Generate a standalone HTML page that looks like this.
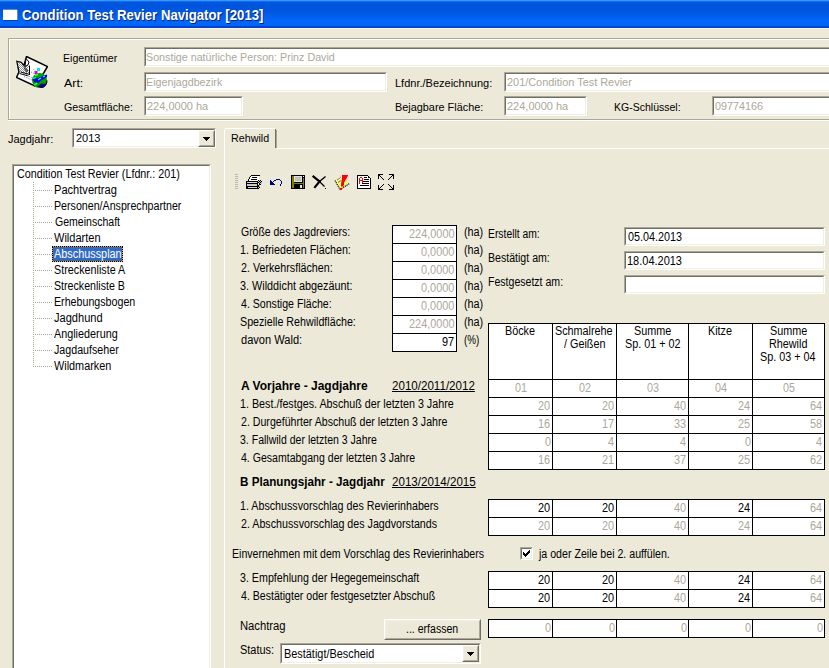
<!DOCTYPE html>
<html><head><meta charset="utf-8"><style>
html,body{margin:0;padding:0}
body{width:829px;height:668px;overflow:hidden;position:relative;background:#ECE9D8;font-family:"Liberation Sans", sans-serif}
.t{position:absolute;white-space:nowrap;transform-origin:0 0}
</style></head><body>
<div style="position:absolute;left:0px;top:0px;width:829px;height:28px;background:linear-gradient(to bottom,#3D95FF 0px,#3D95FF 1px,#0A6CF4 1px,#0A6CF4 2px,#0058E2 2px,#0054DB 5px,#0056DE 9px,#005CE8 15px,#0064F6 19px,#0067FC 24px,#0062F4 26px,#0062F4 26px,#0044D0 26px,#0042CF 28px)"></div>
<div style="position:absolute;left:0px;top:28px;width:829px;height:1px;background:#FBF6E4"></div>
<div style="position:absolute;left:3px;top:9px;width:14px;height:1px;background:#5A8CD8"></div>
<div style="position:absolute;left:3px;top:10px;width:14px;height:10px;background:#fff"></div>
<div style="position:absolute;left:17px;top:10px;width:1px;height:10px;background:#7A8AA0"></div>
<div style="position:absolute;left:4px;top:20px;width:14px;height:1px;background:#0B3FA8"></div>
<div style="position:absolute;left:8px;top:38px;width:900px;height:82px;box-sizing:border-box;border:1px solid #ACA899"></div>
<div style="position:absolute;left:9px;top:39px;width:900px;height:82px;box-sizing:border-box;border:1px solid #fff;border-right:none"></div>
<div style="position:absolute;left:8px;top:119px;width:900px;height:1px;background:#ACA899"></div>
<div style="position:absolute;left:8px;top:120px;width:900px;height:1px;background:#fff"></div>
<div style="position:absolute;left:144px;top:47px;width:700px;height:20px;background:#fff;box-sizing:border-box;border-top:1px solid #ACA899;border-left:1px solid #ACA899;border-right:1px solid #fff;border-bottom:1px solid #fff"></div>
<div style="position:absolute;left:145px;top:48px;width:698px;height:18px;box-sizing:border-box;border-top:1px solid #716F64;border-left:1px solid #716F64;border-right:1px solid #F1EFE2;border-bottom:1px solid #F1EFE2"></div>
<div style="position:absolute;left:144px;top:72px;width:243px;height:20px;background:#fff;box-sizing:border-box;border-top:1px solid #ACA899;border-left:1px solid #ACA899;border-right:1px solid #fff;border-bottom:1px solid #fff"></div>
<div style="position:absolute;left:145px;top:73px;width:241px;height:18px;box-sizing:border-box;border-top:1px solid #716F64;border-left:1px solid #716F64;border-right:1px solid #F1EFE2;border-bottom:1px solid #F1EFE2"></div>
<div style="position:absolute;left:144px;top:96px;width:99px;height:20px;background:#fff;box-sizing:border-box;border-top:1px solid #ACA899;border-left:1px solid #ACA899;border-right:1px solid #fff;border-bottom:1px solid #fff"></div>
<div style="position:absolute;left:145px;top:97px;width:97px;height:18px;box-sizing:border-box;border-top:1px solid #716F64;border-left:1px solid #716F64;border-right:1px solid #F1EFE2;border-bottom:1px solid #F1EFE2"></div>
<div style="position:absolute;left:504px;top:72px;width:400px;height:20px;background:#fff;box-sizing:border-box;border-top:1px solid #ACA899;border-left:1px solid #ACA899;border-right:1px solid #fff;border-bottom:1px solid #fff"></div>
<div style="position:absolute;left:505px;top:73px;width:398px;height:18px;box-sizing:border-box;border-top:1px solid #716F64;border-left:1px solid #716F64;border-right:1px solid #F1EFE2;border-bottom:1px solid #F1EFE2"></div>
<div style="position:absolute;left:504px;top:96px;width:83px;height:20px;background:#fff;box-sizing:border-box;border-top:1px solid #ACA899;border-left:1px solid #ACA899;border-right:1px solid #fff;border-bottom:1px solid #fff"></div>
<div style="position:absolute;left:505px;top:97px;width:81px;height:18px;box-sizing:border-box;border-top:1px solid #716F64;border-left:1px solid #716F64;border-right:1px solid #F1EFE2;border-bottom:1px solid #F1EFE2"></div>
<div style="position:absolute;left:712px;top:96px;width:200px;height:20px;background:#fff;box-sizing:border-box;border-top:1px solid #ACA899;border-left:1px solid #ACA899;border-right:1px solid #fff;border-bottom:1px solid #fff"></div>
<div style="position:absolute;left:713px;top:97px;width:198px;height:18px;box-sizing:border-box;border-top:1px solid #716F64;border-left:1px solid #716F64;border-right:1px solid #F1EFE2;border-bottom:1px solid #F1EFE2"></div>
<div style="position:absolute;left:72px;top:128px;width:144px;height:20px;background:#fff;box-sizing:border-box;border-top:1px solid #ACA899;border-left:1px solid #ACA899;border-right:1px solid #fff;border-bottom:1px solid #fff"></div>
<div style="position:absolute;left:73px;top:129px;width:142px;height:18px;box-sizing:border-box;border-top:1px solid #716F64;border-left:1px solid #716F64;border-right:1px solid #F1EFE2;border-bottom:1px solid #F1EFE2"></div>
<div style="position:absolute;left:198px;top:130px;width:17px;height:17px;background:#ECE9D8;box-sizing:border-box;border-top:1px solid #fff;border-left:1px solid #fff;border-right:1px solid #716F64;border-bottom:1px solid #716F64"></div>
<div style="position:absolute;left:199px;top:131px;width:15px;height:15px;box-sizing:border-box;border-top:1px solid #F1EFE2;border-left:1px solid #F1EFE2;border-right:1px solid #ACA899;border-bottom:1px solid #ACA899"></div>
<svg style="position:absolute;left:203px;top:137px" width="7" height="4"><path d="M0 0h7v1h-1v1h-1v1h-1v1h-1v-1h-1v-1h-1v-1h-1z" fill="#000"/></svg>
<div style="position:absolute;left:12px;top:164px;width:199px;height:520px;background:#fff;box-sizing:border-box;border-top:1px solid #ACA899;border-left:1px solid #ACA899;border-right:1px solid #fff;border-bottom:1px solid #fff"></div>
<div style="position:absolute;left:13px;top:165px;width:197px;height:518px;box-sizing:border-box;border-top:1px solid #716F64;border-left:1px solid #716F64;border-right:1px solid #F1EFE2;border-bottom:1px solid #F1EFE2"></div>
<div style="position:absolute;left:33px;top:182px;width:1px;height:185px;background:repeating-linear-gradient(to bottom,#A9A593 0 1px,transparent 1px 2px)"></div>
<div style="position:absolute;left:35px;top:190px;width:17px;height:1px;background:repeating-linear-gradient(to right,#A9A593 0 1px,transparent 1px 2px)"></div>
<div style="position:absolute;left:35px;top:206px;width:17px;height:1px;background:repeating-linear-gradient(to right,#A9A593 0 1px,transparent 1px 2px)"></div>
<div style="position:absolute;left:35px;top:222px;width:17px;height:1px;background:repeating-linear-gradient(to right,#A9A593 0 1px,transparent 1px 2px)"></div>
<div style="position:absolute;left:35px;top:238px;width:17px;height:1px;background:repeating-linear-gradient(to right,#A9A593 0 1px,transparent 1px 2px)"></div>
<div style="position:absolute;left:35px;top:254px;width:17px;height:1px;background:repeating-linear-gradient(to right,#A9A593 0 1px,transparent 1px 2px)"></div>
<div style="position:absolute;left:52px;top:246px;width:71px;height:16px;background:#F5A830"></div>
<div style="position:absolute;left:52px;top:246px;width:71px;height:16px;box-sizing:border-box;border:1px dotted #000"></div>
<div style="position:absolute;left:53px;top:247px;width:69px;height:14px;background:#316AC5"></div>
<div style="position:absolute;left:35px;top:270px;width:17px;height:1px;background:repeating-linear-gradient(to right,#A9A593 0 1px,transparent 1px 2px)"></div>
<div style="position:absolute;left:35px;top:286px;width:17px;height:1px;background:repeating-linear-gradient(to right,#A9A593 0 1px,transparent 1px 2px)"></div>
<div style="position:absolute;left:35px;top:302px;width:17px;height:1px;background:repeating-linear-gradient(to right,#A9A593 0 1px,transparent 1px 2px)"></div>
<div style="position:absolute;left:35px;top:318px;width:17px;height:1px;background:repeating-linear-gradient(to right,#A9A593 0 1px,transparent 1px 2px)"></div>
<div style="position:absolute;left:35px;top:334px;width:17px;height:1px;background:repeating-linear-gradient(to right,#A9A593 0 1px,transparent 1px 2px)"></div>
<div style="position:absolute;left:35px;top:350px;width:17px;height:1px;background:repeating-linear-gradient(to right,#A9A593 0 1px,transparent 1px 2px)"></div>
<div style="position:absolute;left:35px;top:366px;width:17px;height:1px;background:repeating-linear-gradient(to right,#A9A593 0 1px,transparent 1px 2px)"></div>
<div style="position:absolute;left:224px;top:148px;width:700px;height:600px;background:#ECE9D8;border-left:1px solid #fff;border-top:1px solid #fff"></div>
<div style="position:absolute;left:224px;top:129px;width:52px;height:20px;background:#ECE9D8;border-left:1px solid #fff"></div>
<div style="position:absolute;left:225px;top:128px;width:50px;height:1px;background:#fff"></div>
<div style="position:absolute;left:275px;top:129px;width:1px;height:19px;background:#716F64"></div>
<div style="position:absolute;left:276px;top:130px;width:1px;height:18px;background:#ACA899"></div>
<div style="position:absolute;left:235px;top:174px;width:3px;height:1px;background:#B8B8B8"></div>
<div style="position:absolute;left:235px;top:176px;width:3px;height:1px;background:#B8B8B8"></div>
<div style="position:absolute;left:235px;top:178px;width:3px;height:1px;background:#B8B8B8"></div>
<div style="position:absolute;left:235px;top:180px;width:3px;height:1px;background:#B8B8B8"></div>
<div style="position:absolute;left:235px;top:182px;width:3px;height:1px;background:#B8B8B8"></div>
<div style="position:absolute;left:235px;top:184px;width:3px;height:1px;background:#B8B8B8"></div>
<div style="position:absolute;left:235px;top:186px;width:3px;height:1px;background:#B8B8B8"></div>
<div style="position:absolute;left:235px;top:188px;width:3px;height:1px;background:#B8B8B8"></div>
<svg style="position:absolute;left:244px;top:172px" width="20" height="20" shape-rendering="crispEdges">
<path d="M7 3h9v1h-1v5h-1v-5h-8zM6 4h1v1h-1zM5 5h1v2h-1zM4 7h1v2h-1z" fill="#000"/>
<path d="M7 4h8v5h-10v-2h1v-2h1z" fill="#fff"/>
<rect x="8" y="5" width="5" height="1" fill="#000"/><rect x="7" y="7" width="6" height="1" fill="#000"/>
<rect x="2" y="9" width="12" height="8" fill="#000"/>
<rect x="3" y="10" width="10" height="1" fill="#D8D8E8"/>
<rect x="3" y="12" width="10" height="2" fill="#C8C8D8"/>
<rect x="9" y="13" width="3" height="1" fill="#F0F000"/>
<rect x="4" y="15" width="9" height="1" fill="#D8D8E8"/>
<path d="M14 8h1v1h-1zM16 8h1v1h-1zM15 9h1v1h-1zM17 9h1v1h-1zM14 10h1v1h-1zM16 10h1v1h-1zM15 11h1v2h-1zM16 12h1v1h-1zM14 13h1v2h-1zM15 15h1v1h-1zM14 16h1v1h-1z" fill="#000"/>
<path d="M15 8h1v1h-1zM14 9h1v1h-1zM16 9h1v1h-1zM15 10h1v1h-1zM17 10h1v2h-1zM16 11h1v1h-1zM15 13h1v2h-1zM14 15h1v1h-1z" fill="#C0C0C0"/>
</svg>
<svg style="position:absolute;left:266px;top:172px" width="20" height="20" shape-rendering="crispEdges">
<path d="M4 8h1v1h1v1h1v1h1v1h1v1h-5z" fill="#000080"/>
<path d="M7 9h1v1h-1zM8 8h2v1h-2zM10 7h4v1h-4zM14 8h1v1h-1zM15 9h1v3h-1zM14 12h1v2h-1z" fill="#000080"/>
</svg>
<svg style="position:absolute;left:288px;top:172px" width="20" height="20" shape-rendering="crispEdges">
<rect x="3" y="3" width="14" height="14" fill="#000"/>
<rect x="4" y="4" width="2" height="12" fill="#808000"/>
<rect x="15" y="6" width="1" height="10" fill="#808000"/>
<rect x="4" y="11" width="12" height="1" fill="#808000"/>
<rect x="6" y="4" width="8" height="6" fill="#E0E0E0"/>
<rect x="7" y="5" width="6" height="4" fill="#C0C0C0"/>
<rect x="15" y="4" width="1" height="1" fill="#fff"/>
<rect x="12" y="13" width="2" height="3" fill="#E8E8E8"/>
</svg>
<svg style="position:absolute;left:310px;top:172px" width="20" height="20">
<path d="M3.5 4.5L9.5 9.5" stroke="#000" stroke-width="2.2" stroke-linecap="square"/>
<path d="M9.5 9.5L14.5 14.5" stroke="#000" stroke-width="1.3"/>
<rect x="15" y="16" width="1" height="1" fill="#000"/>
<path d="M15.5 4.5L9.5 9.5" stroke="#000" stroke-width="1.4"/>
<path d="M9.5 9.5L5 15" stroke="#000" stroke-width="2.2" stroke-linecap="square"/>
</svg>
<svg style="position:absolute;left:332px;top:172px" width="20" height="20">
<defs><pattern id="ychk" width="2" height="2" patternUnits="userSpaceOnUse"><rect width="2" height="2" fill="#FFFF00"/><rect width="1" height="1" fill="#fff"/><rect x="1" y="1" width="1" height="1" fill="#fff"/></pattern></defs>
<path d="M3 8.5L9 4.5L17.5 11.5L8 17.5Z" fill="url(#ychk)"/>
<path d="M3 8.5L8 17.5L17.5 11.5" fill="none" stroke="#000" stroke-width="1.2" stroke-dasharray="1.2 0.8"/>
<path d="M5 8L8 6M6 10.5L9 8.5M8 5.5L9 5" stroke="#7070A0" stroke-width="1"/>
<path d="M10 3H16V4L15 5V6L14 7L13 9L12 11V13L11 14.5H9V12L9.5 9L10 6Z" fill="#FF0000"/>
<rect x="8" y="16" width="2" height="2" fill="#FF0000"/>
</svg>
<svg style="position:absolute;left:354px;top:172px" width="20" height="20" shape-rendering="crispEdges">
<path d="M3 3h11v1h1v1h1v1h1v11h-14z" fill="#000"/>
<path d="M4 4h10v2h2v10h-12z" fill="#fff"/>
<path d="M6 5h2v1h1v6h-1v-3h-2v3h-1v-6h1zM6 6v2h2v-2z" fill="#FF0000"/>
<rect x="10" y="5" width="3" height="1" fill="#000"/>
<rect x="10" y="7" width="5" height="1" fill="#000"/>
<rect x="9" y="9" width="6" height="1" fill="#000"/>
<rect x="8" y="11" width="7" height="1" fill="#000"/>
<rect x="6" y="13" width="9" height="1" fill="#000"/>
</svg>
<svg style="position:absolute;left:376px;top:172px" width="20" height="20" shape-rendering="crispEdges">
<path d="M2 2h5v1h-4v4h-1zM3 3h1v1h-1z" fill="#000"/>
<path d="M4 4h1v1h-1zM5 5h1v1h-1zM6 6h1v1h-1zM7 7h1v1h-1z" fill="#000"/>
<path d="M13 2h5v5h-1v-4h-4zM16 3h1v1h-1z" fill="#000"/>
<path d="M15 4h1v1h-1zM14 5h1v1h-1zM13 6h1v1h-1zM12 7h1v1h-1z" fill="#000"/>
<path d="M2 13h1v4h4v1h-5zM3 16h1v1h-1z" fill="#000"/>
<path d="M4 15h1v1h-1zM5 14h1v1h-1zM6 13h1v1h-1zM7 12h1v1h-1z" fill="#000"/>
<path d="M17 13h1v5h-5v-1h4zM16 16h1v1h-1z" fill="#000"/>
<path d="M15 15h1v1h-1zM14 14h1v1h-1zM13 13h1v1h-1zM12 12h1v1h-1z" fill="#000"/>
</svg>
<svg style="position:absolute;left:16px;top:56px" width="32" height="32">
<defs><pattern id="chk" width="2" height="2" patternUnits="userSpaceOnUse"><rect width="2" height="2" fill="#fff"/><rect width="1" height="1" fill="#909090"/><rect x="1" y="1" width="1" height="1" fill="#909090"/></pattern></defs>
<path d="M10.5 0.5L31.5 10.5L28 16.5L19 30L0.5 21.5L3 16L1 5.5L5 6.5L8 9.5Z" fill="#fff" stroke="#000" stroke-width="1.5" stroke-linejoin="miter"/>
<path d="M1.5 6L5 7L8.5 10L11 8L13 10L12 12L13.5 18L10 19L4 15.5L3 12Z" fill="url(#chk)"/>
<path d="M10 2.5L13 6L12 9L9 10.5Z" fill="#fff" stroke="#000" stroke-width="1"/>
<path d="M3.5 17.5L12.5 20M4.5 16L14 18.5M13.5 9.5L13.5 19" stroke="#000" stroke-width="1"/>
<path d="M6 8L12 15M8 12L11 16" stroke="#000" stroke-width="0.8"/>
<path d="M8 20.5L17 24.5M11 19.5L18 22.5M17 13L20 15M15 16L19 18" stroke="#808080" stroke-width="0.9" stroke-dasharray="1 1"/>
<rect x="18.5" y="15" width="3" height="3" fill="#E000E0"/>
<rect x="21" y="12" width="3" height="3" fill="#00E8F0"/>
<circle cx="23.5" cy="24.5" r="7.5" fill="#00A000"/>
<path d="M31 24.5A7.5 7.5 0 0 1 23.5 32" fill="none" stroke="#000" stroke-width="1.2"/>
<path d="M16.5 23L22 22L28 19.5L31 18.5L31 21L26 24L22 27L18 26Z" fill="#0000E0"/>
<path d="M21 31L25 27.5L30 28L27 31.5Z" fill="#000090"/>
<path d="M17 22.5L20 21.5M22 24L25 22M27 21L29 20" stroke="#00FFFF" stroke-width="1.3"/>
<path d="M19 19.5L22 18.5M18.5 29L21 27" stroke="#40FF40" stroke-width="1.5"/>
</svg>

<div style="position:absolute;left:392px;top:225px;width:65px;height:19px;background:#fff;box-sizing:border-box;border:1px solid #000"></div>
<div style="position:absolute;left:392px;top:243px;width:65px;height:19px;background:#fff;box-sizing:border-box;border:1px solid #000"></div>
<div style="position:absolute;left:392px;top:261px;width:65px;height:19px;background:#fff;box-sizing:border-box;border:1px solid #000"></div>
<div style="position:absolute;left:392px;top:279px;width:65px;height:19px;background:#fff;box-sizing:border-box;border:1px solid #000"></div>
<div style="position:absolute;left:392px;top:297px;width:65px;height:19px;background:#fff;box-sizing:border-box;border:1px solid #000"></div>
<div style="position:absolute;left:392px;top:315px;width:65px;height:19px;background:#fff;box-sizing:border-box;border:1px solid #000"></div>
<div style="position:absolute;left:392px;top:333px;width:65px;height:19px;background:#fff;box-sizing:border-box;border:1px solid #000"></div>
<div style="position:absolute;left:624px;top:227px;width:201px;height:19px;background:#fff;box-sizing:border-box;border-top:1px solid #ACA899;border-left:1px solid #ACA899;border-right:1px solid #fff;border-bottom:1px solid #fff"></div>
<div style="position:absolute;left:625px;top:228px;width:199px;height:17px;box-sizing:border-box;border-top:1px solid #716F64;border-left:1px solid #716F64;border-right:1px solid #F1EFE2;border-bottom:1px solid #F1EFE2"></div>
<div style="position:absolute;left:624px;top:251px;width:201px;height:19px;background:#fff;box-sizing:border-box;border-top:1px solid #ACA899;border-left:1px solid #ACA899;border-right:1px solid #fff;border-bottom:1px solid #fff"></div>
<div style="position:absolute;left:625px;top:252px;width:199px;height:17px;box-sizing:border-box;border-top:1px solid #716F64;border-left:1px solid #716F64;border-right:1px solid #F1EFE2;border-bottom:1px solid #F1EFE2"></div>
<div style="position:absolute;left:624px;top:275px;width:201px;height:19px;background:#fff;box-sizing:border-box;border-top:1px solid #ACA899;border-left:1px solid #ACA899;border-right:1px solid #fff;border-bottom:1px solid #fff"></div>
<div style="position:absolute;left:625px;top:276px;width:199px;height:17px;box-sizing:border-box;border-top:1px solid #716F64;border-left:1px solid #716F64;border-right:1px solid #F1EFE2;border-bottom:1px solid #F1EFE2"></div>
<div style="position:absolute;left:488px;top:323px;width:337px;height:147px;background:#fff"></div>
<div style="position:absolute;left:488px;top:323px;width:337px;height:1px;background:#000"></div>
<div style="position:absolute;left:488px;top:379px;width:337px;height:1px;background:#000"></div>
<div style="position:absolute;left:488px;top:397px;width:337px;height:1px;background:#000"></div>
<div style="position:absolute;left:488px;top:415px;width:337px;height:1px;background:#000"></div>
<div style="position:absolute;left:488px;top:433px;width:337px;height:1px;background:#000"></div>
<div style="position:absolute;left:488px;top:451px;width:337px;height:1px;background:#000"></div>
<div style="position:absolute;left:488px;top:469px;width:337px;height:1px;background:#000"></div>
<div style="position:absolute;left:488px;top:323px;width:1px;height:147px;background:#000"></div>
<div style="position:absolute;left:552px;top:323px;width:1px;height:147px;background:#000"></div>
<div style="position:absolute;left:616px;top:323px;width:1px;height:147px;background:#000"></div>
<div style="position:absolute;left:688px;top:323px;width:1px;height:147px;background:#000"></div>
<div style="position:absolute;left:752px;top:323px;width:1px;height:147px;background:#000"></div>
<div style="position:absolute;left:824px;top:323px;width:1px;height:147px;background:#000"></div>
<div style="position:absolute;left:488px;top:499px;width:337px;height:37px;background:#fff"></div>
<div style="position:absolute;left:488px;top:499px;width:337px;height:1px;background:#000"></div>
<div style="position:absolute;left:488px;top:517px;width:337px;height:1px;background:#000"></div>
<div style="position:absolute;left:488px;top:535px;width:337px;height:1px;background:#000"></div>
<div style="position:absolute;left:488px;top:499px;width:1px;height:37px;background:#000"></div>
<div style="position:absolute;left:552px;top:499px;width:1px;height:37px;background:#000"></div>
<div style="position:absolute;left:616px;top:499px;width:1px;height:37px;background:#000"></div>
<div style="position:absolute;left:688px;top:499px;width:1px;height:37px;background:#000"></div>
<div style="position:absolute;left:752px;top:499px;width:1px;height:37px;background:#000"></div>
<div style="position:absolute;left:824px;top:499px;width:1px;height:37px;background:#000"></div>
<div style="position:absolute;left:520px;top:547px;width:13px;height:13px;background:#fff;box-sizing:border-box;border-top:1px solid #ACA899;border-left:1px solid #ACA899;border-right:1px solid #fff;border-bottom:1px solid #fff"></div>
<div style="position:absolute;left:521px;top:548px;width:11px;height:11px;box-sizing:border-box;border-top:1px solid #716F64;border-left:1px solid #716F64;border-right:1px solid #F1EFE2;border-bottom:1px solid #F1EFE2"></div>
<svg style="position:absolute;left:523px;top:550px" width="7" height="7"><path d="M0 2h1v1h1v1h1v-1h1v-1h1v-1h1v-1h1v3h-1v1h-1v1h-1v1h-1v1h-1v-1h-1v-1h-1v-1h-1z" fill="#000"/></svg>
<div style="position:absolute;left:488px;top:571px;width:337px;height:37px;background:#fff"></div>
<div style="position:absolute;left:488px;top:571px;width:337px;height:1px;background:#000"></div>
<div style="position:absolute;left:488px;top:589px;width:337px;height:1px;background:#000"></div>
<div style="position:absolute;left:488px;top:607px;width:337px;height:1px;background:#000"></div>
<div style="position:absolute;left:488px;top:571px;width:1px;height:37px;background:#000"></div>
<div style="position:absolute;left:552px;top:571px;width:1px;height:37px;background:#000"></div>
<div style="position:absolute;left:616px;top:571px;width:1px;height:37px;background:#000"></div>
<div style="position:absolute;left:688px;top:571px;width:1px;height:37px;background:#000"></div>
<div style="position:absolute;left:752px;top:571px;width:1px;height:37px;background:#000"></div>
<div style="position:absolute;left:824px;top:571px;width:1px;height:37px;background:#000"></div>
<div style="position:absolute;left:384px;top:619px;width:97px;height:21px;background:#ECE9D8;box-sizing:border-box;border-top:1px solid #fff;border-left:1px solid #fff;border-right:1px solid #716F64;border-bottom:1px solid #716F64"></div>
<div style="position:absolute;left:385px;top:620px;width:95px;height:19px;box-sizing:border-box;border-top:1px solid #F1EFE2;border-left:1px solid #F1EFE2;border-right:1px solid #ACA899;border-bottom:1px solid #ACA899"></div>
<div style="position:absolute;left:488px;top:619px;width:337px;height:19px;background:#fff"></div>
<div style="position:absolute;left:488px;top:619px;width:337px;height:1px;background:#000"></div>
<div style="position:absolute;left:488px;top:637px;width:337px;height:1px;background:#000"></div>
<div style="position:absolute;left:488px;top:619px;width:1px;height:19px;background:#000"></div>
<div style="position:absolute;left:552px;top:619px;width:1px;height:19px;background:#000"></div>
<div style="position:absolute;left:616px;top:619px;width:1px;height:19px;background:#000"></div>
<div style="position:absolute;left:688px;top:619px;width:1px;height:19px;background:#000"></div>
<div style="position:absolute;left:752px;top:619px;width:1px;height:19px;background:#000"></div>
<div style="position:absolute;left:824px;top:619px;width:1px;height:19px;background:#000"></div>
<div style="position:absolute;left:280px;top:643px;width:201px;height:21px;background:#fff;box-sizing:border-box;border-top:1px solid #ACA899;border-left:1px solid #ACA899;border-right:1px solid #fff;border-bottom:1px solid #fff"></div>
<div style="position:absolute;left:281px;top:644px;width:199px;height:19px;box-sizing:border-box;border-top:1px solid #716F64;border-left:1px solid #716F64;border-right:1px solid #F1EFE2;border-bottom:1px solid #F1EFE2"></div>
<div style="position:absolute;left:462px;top:645px;width:17px;height:17px;background:#ECE9D8;box-sizing:border-box;border-top:1px solid #fff;border-left:1px solid #fff;border-right:1px solid #716F64;border-bottom:1px solid #716F64"></div>
<div style="position:absolute;left:463px;top:646px;width:15px;height:15px;box-sizing:border-box;border-top:1px solid #F1EFE2;border-left:1px solid #F1EFE2;border-right:1px solid #ACA899;border-bottom:1px solid #ACA899"></div>
<svg style="position:absolute;left:467px;top:652px" width="7" height="4"><path d="M0 0h7v1h-1v1h-1v1h-1v1h-1v-1h-1v-1h-1v-1h-1z" fill="#000"/></svg>
<div class="t" style="left:22.00px;top:7.0px;font:bold 14px 'Liberation Sans';line-height:16px;color:#fff;transform:scaleX(0.9414);text-shadow:1px 1px 0 #0A246A">Condition Test Revier Navigator [2013]</div>
<div class="t" style="left:63.04px;top:51.5px;font:11px 'Liberation Sans';line-height:13px;color:#000;transform:scaleX(0.9636)">Eigentümer</div>
<div class="t" style="left:64.00px;top:76.5px;font:11px 'Liberation Sans';line-height:13px;color:#000;transform:scaleX(1.1250)">Art:</div>
<div class="t" style="left:64.00px;top:100.5px;font:11px 'Liberation Sans';line-height:13px;color:#000;transform:scaleX(0.9714)">Gesamtfläche:</div>
<div class="t" style="left:146.03px;top:50.5px;font:11px 'Liberation Sans';line-height:13px;color:#ACA899;transform:scaleX(0.9740)">Sonstige natürliche Person: Prinz David</div>
<div class="t" style="left:146.03px;top:75.5px;font:11px 'Liberation Sans';line-height:13px;color:#ACA899;transform:scaleX(0.9740)">Eigenjagdbezirk</div>
<div class="t" style="left:147.00px;top:99.5px;font:11px 'Liberation Sans';line-height:13px;color:#ACA899;transform:scaleX(1.0000)">224,0000 ha</div>
<div class="t" style="left:395.00px;top:76.5px;font:11px 'Liberation Sans';line-height:13px;color:#000;transform:scaleX(1.0000)">Lfdnr./Bezeichnung:</div>
<div class="t" style="left:395.01px;top:100.5px;font:11px 'Liberation Sans';line-height:13px;color:#000;transform:scaleX(0.9886)">Bejagbare Fläche:</div>
<div class="t" style="left:614.04px;top:100.5px;font:11px 'Liberation Sans';line-height:13px;color:#000;transform:scaleX(0.9559)">KG-Schlüssel:</div>
<div class="t" style="left:507.00px;top:75.5px;font:11px 'Liberation Sans';line-height:13px;color:#ACA899;transform:scaleX(0.9921)">201/Condition Test Revier</div>
<div class="t" style="left:507.00px;top:99.5px;font:11px 'Liberation Sans';line-height:13px;color:#ACA899;transform:scaleX(1.0000)">224,0000 ha</div>
<div class="t" style="left:715.00px;top:99.5px;font:11px 'Liberation Sans';line-height:13px;color:#ACA899;transform:scaleX(0.9796)">09774166</div>
<div class="t" style="left:8.00px;top:132.5px;font:11px 'Liberation Sans';line-height:13px;color:#000;transform:scaleX(1.0000)">Jagdjahr:</div>
<div class="t" style="left:76.00px;top:131.5px;font:11px 'Liberation Sans';line-height:13px;color:#000;transform:scaleX(1.0000)">2013</div>
<div class="t" style="left:17.00px;top:167.0px;font:12px 'Liberation Sans';line-height:14px;color:#000;transform:scaleX(0.8950)">Condition Test Revier (Lfdnr.: 201)</div>
<div class="t" style="left:54.08px;top:183.0px;font:12px 'Liberation Sans';line-height:14px;color:#000;transform:scaleX(0.9242)">Pachtvertrag</div>
<div class="t" style="left:54.11px;top:199.0px;font:12px 'Liberation Sans';line-height:14px;color:#000;transform:scaleX(0.8881)">Personen/Ansprechpartner</div>
<div class="t" style="left:55.00px;top:215.0px;font:12px 'Liberation Sans';line-height:14px;color:#000;transform:scaleX(0.8784)">Gemeinschaft</div>
<div class="t" style="left:54.00px;top:231.0px;font:12px 'Liberation Sans';line-height:14px;color:#000;transform:scaleX(0.9200)">Wildarten</div>
<div class="t" style="left:54.00px;top:247.0px;font:12px 'Liberation Sans';line-height:14px;color:#fff;transform:scaleX(0.9054)">Abschussplan</div>
<div class="t" style="left:54.10px;top:263.0px;font:12px 'Liberation Sans';line-height:14px;color:#000;transform:scaleX(0.8974)">Streckenliste A</div>
<div class="t" style="left:54.11px;top:279.0px;font:12px 'Liberation Sans';line-height:14px;color:#000;transform:scaleX(0.8861)">Streckenliste B</div>
<div class="t" style="left:54.11px;top:295.0px;font:12px 'Liberation Sans';line-height:14px;color:#000;transform:scaleX(0.8889)">Erhebungsbogen</div>
<div class="t" style="left:54.00px;top:311.0px;font:12px 'Liberation Sans';line-height:14px;color:#000;transform:scaleX(0.9231)">Jagdhund</div>
<div class="t" style="left:54.00px;top:327.0px;font:12px 'Liberation Sans';line-height:14px;color:#000;transform:scaleX(0.9000)">Angliederung</div>
<div class="t" style="left:54.00px;top:343.0px;font:12px 'Liberation Sans';line-height:14px;color:#000;transform:scaleX(0.8904)">Jagdaufseher</div>
<div class="t" style="left:54.00px;top:359.0px;font:12px 'Liberation Sans';line-height:14px;color:#000;transform:scaleX(0.9048)">Wildmarken</div>
<div class="t" style="left:231.03px;top:131.5px;font:11px 'Liberation Sans';line-height:13px;color:#000;transform:scaleX(0.9737)">Rehwild</div>
<div class="t" style="left:241.00px;top:225.0px;font:12px 'Liberation Sans';line-height:14px;color:#000;transform:scaleX(0.8710)">Größe des Jagdreviers:</div>
<div class="t" style="left:408.50px;top:227.0px;font:12px 'Liberation Sans';line-height:14px;color:#ACA899;transform:scaleX(0.9100)">224,0000</div>
<div class="t" style="left:464.10px;top:225.0px;font:12px 'Liberation Sans';line-height:14px;color:#000;transform:scaleX(0.9000)">(ha)</div>
<div class="t" style="left:240.11px;top:243.0px;font:12px 'Liberation Sans';line-height:14px;color:#000;transform:scaleX(0.8934)">1. Befriedeten Flächen:</div>
<div class="t" style="left:421.24px;top:245.0px;font:12px 'Liberation Sans';line-height:14px;color:#ACA899;transform:scaleX(0.9100)">0,0000</div>
<div class="t" style="left:464.10px;top:243.0px;font:12px 'Liberation Sans';line-height:14px;color:#000;transform:scaleX(0.9000)">(ha)</div>
<div class="t" style="left:241.00px;top:261.0px;font:12px 'Liberation Sans';line-height:14px;color:#000;transform:scaleX(0.8922)">2. Verkehrsflächen:</div>
<div class="t" style="left:421.24px;top:263.0px;font:12px 'Liberation Sans';line-height:14px;color:#ACA899;transform:scaleX(0.9100)">0,0000</div>
<div class="t" style="left:464.10px;top:261.0px;font:12px 'Liberation Sans';line-height:14px;color:#000;transform:scaleX(0.9000)">(ha)</div>
<div class="t" style="left:240.10px;top:279.0px;font:12px 'Liberation Sans';line-height:14px;color:#000;transform:scaleX(0.9024)">3. Wilddicht abgezäunt:</div>
<div class="t" style="left:421.24px;top:281.0px;font:12px 'Liberation Sans';line-height:14px;color:#ACA899;transform:scaleX(0.9100)">0,0000</div>
<div class="t" style="left:464.10px;top:279.0px;font:12px 'Liberation Sans';line-height:14px;color:#000;transform:scaleX(0.9000)">(ha)</div>
<div class="t" style="left:241.00px;top:297.0px;font:12px 'Liberation Sans';line-height:14px;color:#000;transform:scaleX(0.8824)">4. Sonstige Fläche:</div>
<div class="t" style="left:421.24px;top:299.0px;font:12px 'Liberation Sans';line-height:14px;color:#ACA899;transform:scaleX(0.9100)">0,0000</div>
<div class="t" style="left:464.10px;top:297.0px;font:12px 'Liberation Sans';line-height:14px;color:#000;transform:scaleX(0.9000)">(ha)</div>
<div class="t" style="left:240.11px;top:315.0px;font:12px 'Liberation Sans';line-height:14px;color:#000;transform:scaleX(0.8906)">Spezielle Rehwildfläche:</div>
<div class="t" style="left:408.50px;top:317.0px;font:12px 'Liberation Sans';line-height:14px;color:#ACA899;transform:scaleX(0.9100)">224,0000</div>
<div class="t" style="left:464.10px;top:315.0px;font:12px 'Liberation Sans';line-height:14px;color:#000;transform:scaleX(0.9000)">(ha)</div>
<div class="t" style="left:241.00px;top:333.0px;font:12px 'Liberation Sans';line-height:14px;color:#000;transform:scaleX(0.9231)">davon Wald:</div>
<div class="t" style="left:442.17px;top:335.0px;font:12px 'Liberation Sans';line-height:14px;color:#000;transform:scaleX(0.9100)">97</div>
<div class="t" style="left:464.18px;top:333.0px;font:12px 'Liberation Sans';line-height:14px;color:#000;transform:scaleX(0.8235)">(%)</div>
<div class="t" style="left:488.14px;top:227.0px;font:12px 'Liberation Sans';line-height:14px;color:#000;transform:scaleX(0.8621)">Erstellt am:</div>
<div class="t" style="left:488.12px;top:251.0px;font:12px 'Liberation Sans';line-height:14px;color:#000;transform:scaleX(0.8824)">Bestätigt am:</div>
<div class="t" style="left:488.12px;top:275.0px;font:12px 'Liberation Sans';line-height:14px;color:#000;transform:scaleX(0.8795)">Festgesetzt am:</div>
<div class="t" style="left:628.00px;top:230.0px;font:12px 'Liberation Sans';line-height:14px;color:#000;transform:scaleX(0.9000)">05.04.2013</div>
<div class="t" style="left:627.08px;top:254.0px;font:12px 'Liberation Sans';line-height:14px;color:#000;transform:scaleX(0.9153)">18.04.2013</div>
<div class="t" style="left:505.20px;top:324.0px;font:12px 'Liberation Sans';line-height:14px;color:#000;transform:scaleX(0.9000)">Böcke</div>
<div class="t" style="left:555.25px;top:324.0px;font:12px 'Liberation Sans';line-height:14px;color:#000;transform:scaleX(0.9000)">Schmalrehe</div>
<div class="t" style="left:564.25px;top:337.0px;font:12px 'Liberation Sans';line-height:14px;color:#000;transform:scaleX(0.9000)">/ Geißen</div>
<div class="t" style="left:633.60px;top:324.0px;font:12px 'Liberation Sans';line-height:14px;color:#000;transform:scaleX(0.9000)">Summe</div>
<div class="t" style="left:624.60px;top:337.0px;font:12px 'Liberation Sans';line-height:14px;color:#000;transform:scaleX(0.9000)">Sp. 01 + 02</div>
<div class="t" style="left:708.35px;top:324.0px;font:12px 'Liberation Sans';line-height:14px;color:#000;transform:scaleX(0.9000)">Kitze</div>
<div class="t" style="left:769.60px;top:324.0px;font:12px 'Liberation Sans';line-height:14px;color:#000;transform:scaleX(0.9000)">Summe</div>
<div class="t" style="left:769.15px;top:337.0px;font:12px 'Liberation Sans';line-height:14px;color:#000;transform:scaleX(0.9000)">Rhewild</div>
<div class="t" style="left:760.15px;top:350.0px;font:12px 'Liberation Sans';line-height:14px;color:#000;transform:scaleX(0.9000)">Sp. 03 + 04</div>
<div class="t" style="left:514.65px;top:381.0px;font:12px 'Liberation Sans';line-height:14px;color:#ACA899;transform:scaleX(0.9000)">01</div>
<div class="t" style="left:578.65px;top:381.0px;font:12px 'Liberation Sans';line-height:14px;color:#ACA899;transform:scaleX(0.9000)">02</div>
<div class="t" style="left:646.65px;top:381.0px;font:12px 'Liberation Sans';line-height:14px;color:#ACA899;transform:scaleX(0.9000)">03</div>
<div class="t" style="left:714.65px;top:381.0px;font:12px 'Liberation Sans';line-height:14px;color:#ACA899;transform:scaleX(0.9000)">04</div>
<div class="t" style="left:782.65px;top:381.0px;font:12px 'Liberation Sans';line-height:14px;color:#ACA899;transform:scaleX(0.9000)">05</div>
<div class="t" style="left:538.17px;top:399.0px;font:12px 'Liberation Sans';line-height:14px;color:#ACA899;transform:scaleX(0.9100)">20</div>
<div class="t" style="left:602.17px;top:399.0px;font:12px 'Liberation Sans';line-height:14px;color:#ACA899;transform:scaleX(0.9100)">20</div>
<div class="t" style="left:674.17px;top:399.0px;font:12px 'Liberation Sans';line-height:14px;color:#ACA899;transform:scaleX(0.9100)">40</div>
<div class="t" style="left:738.17px;top:399.0px;font:12px 'Liberation Sans';line-height:14px;color:#ACA899;transform:scaleX(0.9100)">24</div>
<div class="t" style="left:810.17px;top:399.0px;font:12px 'Liberation Sans';line-height:14px;color:#ACA899;transform:scaleX(0.9100)">64</div>
<div class="t" style="left:538.17px;top:417.0px;font:12px 'Liberation Sans';line-height:14px;color:#ACA899;transform:scaleX(0.9100)">16</div>
<div class="t" style="left:602.17px;top:417.0px;font:12px 'Liberation Sans';line-height:14px;color:#ACA899;transform:scaleX(0.9100)">17</div>
<div class="t" style="left:674.17px;top:417.0px;font:12px 'Liberation Sans';line-height:14px;color:#ACA899;transform:scaleX(0.9100)">33</div>
<div class="t" style="left:738.17px;top:417.0px;font:12px 'Liberation Sans';line-height:14px;color:#ACA899;transform:scaleX(0.9100)">25</div>
<div class="t" style="left:810.17px;top:417.0px;font:12px 'Liberation Sans';line-height:14px;color:#ACA899;transform:scaleX(0.9100)">58</div>
<div class="t" style="left:544.54px;top:435.0px;font:12px 'Liberation Sans';line-height:14px;color:#ACA899;transform:scaleX(0.9100)">0</div>
<div class="t" style="left:607.63px;top:435.0px;font:12px 'Liberation Sans';line-height:14px;color:#ACA899;transform:scaleX(0.9100)">4</div>
<div class="t" style="left:679.63px;top:435.0px;font:12px 'Liberation Sans';line-height:14px;color:#ACA899;transform:scaleX(0.9100)">4</div>
<div class="t" style="left:744.54px;top:435.0px;font:12px 'Liberation Sans';line-height:14px;color:#ACA899;transform:scaleX(0.9100)">0</div>
<div class="t" style="left:815.63px;top:435.0px;font:12px 'Liberation Sans';line-height:14px;color:#ACA899;transform:scaleX(0.9100)">4</div>
<div class="t" style="left:538.17px;top:453.0px;font:12px 'Liberation Sans';line-height:14px;color:#ACA899;transform:scaleX(0.9100)">16</div>
<div class="t" style="left:602.17px;top:453.0px;font:12px 'Liberation Sans';line-height:14px;color:#ACA899;transform:scaleX(0.9100)">21</div>
<div class="t" style="left:674.17px;top:453.0px;font:12px 'Liberation Sans';line-height:14px;color:#ACA899;transform:scaleX(0.9100)">37</div>
<div class="t" style="left:738.17px;top:453.0px;font:12px 'Liberation Sans';line-height:14px;color:#ACA899;transform:scaleX(0.9100)">25</div>
<div class="t" style="left:810.17px;top:453.0px;font:12px 'Liberation Sans';line-height:14px;color:#ACA899;transform:scaleX(0.9100)">62</div>
<div class="t" style="left:241.00px;top:379.0px;font:bold 12px 'Liberation Sans';line-height:14px;color:#000;transform:scaleX(1.0000)">A Vorjahre - Jagdjahre</div>
<div class="t" style="left:392.00px;top:379.0px;font:12px 'Liberation Sans';line-height:14px;color:#000;transform:scaleX(0.9651);text-decoration:underline">2010/2011/2012</div>
<div class="t" style="left:240.11px;top:397.0px;font:12px 'Liberation Sans';line-height:14px;color:#000;transform:scaleX(0.8950)">1. Best./festges. Abschuß der letzten 3 Jahre</div>
<div class="t" style="left:241.00px;top:415.0px;font:12px 'Liberation Sans';line-height:14px;color:#000;transform:scaleX(0.8841)">2. Durgeführter Abschuß der letzten 3 Jahre</div>
<div class="t" style="left:240.12px;top:433.0px;font:12px 'Liberation Sans';line-height:14px;color:#000;transform:scaleX(0.8774)">3. Fallwild der letzten 3 Jahre</div>
<div class="t" style="left:241.00px;top:451.0px;font:12px 'Liberation Sans';line-height:14px;color:#000;transform:scaleX(0.8788)">4. Gesamtabgang der letzten 3 Jahre</div>
<div class="t" style="left:240.03px;top:475.0px;font:bold 12px 'Liberation Sans';line-height:14px;color:#000;transform:scaleX(0.9730)">B Planungsjahr - Jagdjahr</div>
<div class="t" style="left:392.00px;top:475.0px;font:12px 'Liberation Sans';line-height:14px;color:#000;transform:scaleX(0.9651);text-decoration:underline">2013/2014/2015</div>
<div class="t" style="left:240.11px;top:499.0px;font:12px 'Liberation Sans';line-height:14px;color:#000;transform:scaleX(0.8919)">1. Abschussvorschlag des Revierinhabers</div>
<div class="t" style="left:241.00px;top:517.0px;font:12px 'Liberation Sans';line-height:14px;color:#000;transform:scaleX(0.8909)">2. Abschussvorschlag des Jagdvorstands</div>
<div class="t" style="left:538.17px;top:501.0px;font:12px 'Liberation Sans';line-height:14px;color:#000;transform:scaleX(0.9100)">20</div>
<div class="t" style="left:602.17px;top:501.0px;font:12px 'Liberation Sans';line-height:14px;color:#000;transform:scaleX(0.9100)">20</div>
<div class="t" style="left:674.17px;top:501.0px;font:12px 'Liberation Sans';line-height:14px;color:#ACA899;transform:scaleX(0.9100)">40</div>
<div class="t" style="left:738.17px;top:501.0px;font:12px 'Liberation Sans';line-height:14px;color:#000;transform:scaleX(0.9100)">24</div>
<div class="t" style="left:810.17px;top:501.0px;font:12px 'Liberation Sans';line-height:14px;color:#ACA899;transform:scaleX(0.9100)">64</div>
<div class="t" style="left:538.17px;top:519.0px;font:12px 'Liberation Sans';line-height:14px;color:#ACA899;transform:scaleX(0.9100)">20</div>
<div class="t" style="left:602.17px;top:519.0px;font:12px 'Liberation Sans';line-height:14px;color:#ACA899;transform:scaleX(0.9100)">20</div>
<div class="t" style="left:674.17px;top:519.0px;font:12px 'Liberation Sans';line-height:14px;color:#ACA899;transform:scaleX(0.9100)">40</div>
<div class="t" style="left:738.17px;top:519.0px;font:12px 'Liberation Sans';line-height:14px;color:#ACA899;transform:scaleX(0.9100)">24</div>
<div class="t" style="left:810.17px;top:519.0px;font:12px 'Liberation Sans';line-height:14px;color:#ACA899;transform:scaleX(0.9100)">64</div>
<div class="t" style="left:232.12px;top:547.0px;font:12px 'Liberation Sans';line-height:14px;color:#000;transform:scaleX(0.8807)">Einvernehmen mit dem Vorschlag des Revierinhabers</div>
<div class="t" style="left:539.00px;top:547.0px;font:12px 'Liberation Sans';line-height:14px;color:#000;transform:scaleX(0.8844)">ja oder Zeile bei 2. auffülen.</div>
<div class="t" style="left:240.11px;top:571.0px;font:12px 'Liberation Sans';line-height:14px;color:#000;transform:scaleX(0.8900)">3. Empfehlung der Hegegemeinschaft</div>
<div class="t" style="left:241.00px;top:589.0px;font:12px 'Liberation Sans';line-height:14px;color:#000;transform:scaleX(0.8818)">4. Bestätigter oder festgesetzter Abschuß</div>
<div class="t" style="left:538.17px;top:573.0px;font:12px 'Liberation Sans';line-height:14px;color:#000;transform:scaleX(0.9100)">20</div>
<div class="t" style="left:602.17px;top:573.0px;font:12px 'Liberation Sans';line-height:14px;color:#000;transform:scaleX(0.9100)">20</div>
<div class="t" style="left:674.17px;top:573.0px;font:12px 'Liberation Sans';line-height:14px;color:#ACA899;transform:scaleX(0.9100)">40</div>
<div class="t" style="left:738.17px;top:573.0px;font:12px 'Liberation Sans';line-height:14px;color:#000;transform:scaleX(0.9100)">24</div>
<div class="t" style="left:810.17px;top:573.0px;font:12px 'Liberation Sans';line-height:14px;color:#ACA899;transform:scaleX(0.9100)">64</div>
<div class="t" style="left:538.17px;top:591.0px;font:12px 'Liberation Sans';line-height:14px;color:#000;transform:scaleX(0.9100)">20</div>
<div class="t" style="left:602.17px;top:591.0px;font:12px 'Liberation Sans';line-height:14px;color:#000;transform:scaleX(0.9100)">20</div>
<div class="t" style="left:674.17px;top:591.0px;font:12px 'Liberation Sans';line-height:14px;color:#ACA899;transform:scaleX(0.9100)">40</div>
<div class="t" style="left:738.17px;top:591.0px;font:12px 'Liberation Sans';line-height:14px;color:#000;transform:scaleX(0.9100)">24</div>
<div class="t" style="left:810.17px;top:591.0px;font:12px 'Liberation Sans';line-height:14px;color:#ACA899;transform:scaleX(0.9100)">64</div>
<div class="t" style="left:240.06px;top:619.0px;font:12px 'Liberation Sans';line-height:14px;color:#000;transform:scaleX(0.9362)">Nachtrag</div>
<div class="t" style="left:406.12px;top:622.0px;font:12px 'Liberation Sans';line-height:14px;color:#000;transform:scaleX(0.8793)">... erfassen</div>
<div class="t" style="left:544.54px;top:621.0px;font:12px 'Liberation Sans';line-height:14px;color:#ACA899;transform:scaleX(0.9100)">0</div>
<div class="t" style="left:608.54px;top:621.0px;font:12px 'Liberation Sans';line-height:14px;color:#ACA899;transform:scaleX(0.9100)">0</div>
<div class="t" style="left:680.54px;top:621.0px;font:12px 'Liberation Sans';line-height:14px;color:#ACA899;transform:scaleX(0.9100)">0</div>
<div class="t" style="left:744.54px;top:621.0px;font:12px 'Liberation Sans';line-height:14px;color:#ACA899;transform:scaleX(0.9100)">0</div>
<div class="t" style="left:816.54px;top:621.0px;font:12px 'Liberation Sans';line-height:14px;color:#ACA899;transform:scaleX(0.9100)">0</div>
<div class="t" style="left:240.09px;top:643.0px;font:12px 'Liberation Sans';line-height:14px;color:#000;transform:scaleX(0.9143)">Status:</div>
<div class="t" style="left:284.09px;top:647.0px;font:12px 'Liberation Sans';line-height:14px;color:#000;transform:scaleX(0.9082)">Bestätigt/Bescheid</div>
</body></html>
